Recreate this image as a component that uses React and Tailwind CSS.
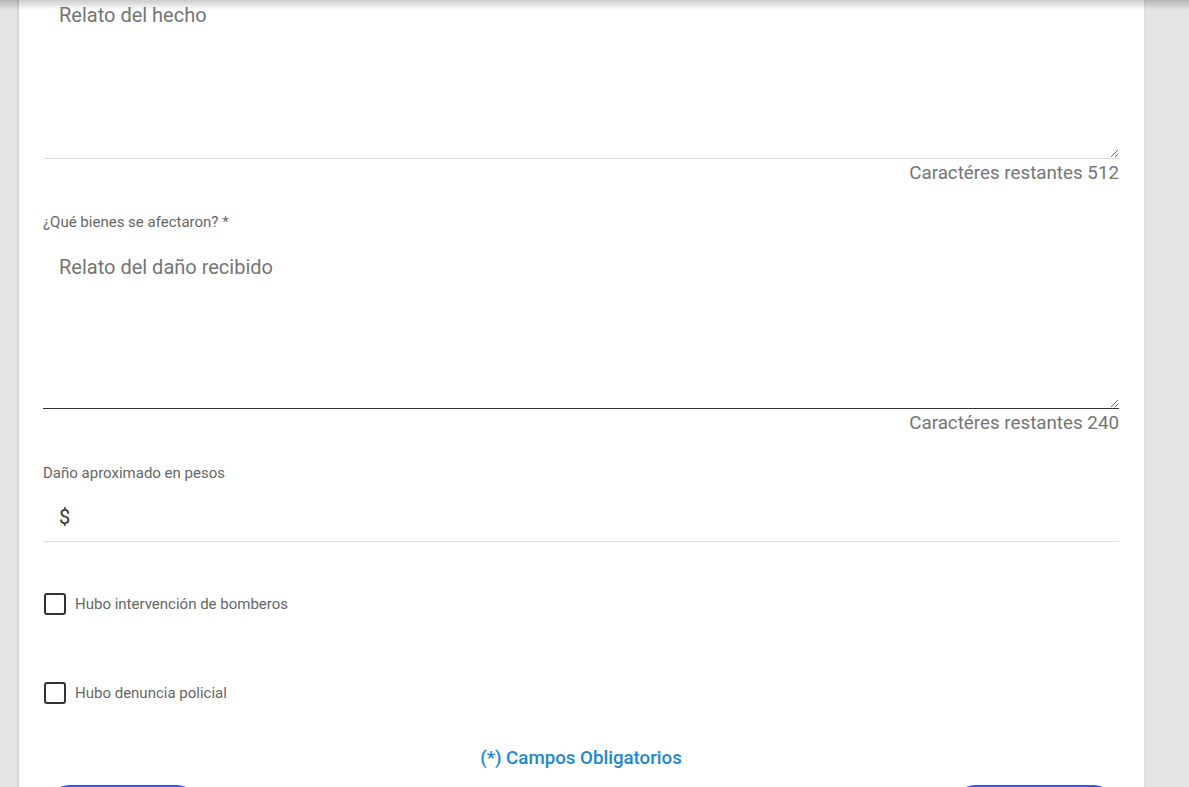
import React from 'react';

const font = { fontFamily: 'Roboto, "Noto Sans", sans-serif' };

function Counter({ left }) {
  return (
    <p className="mt-[2px] text-right text-[18.8px] leading-6 text-[#757575]">Caractéres restantes {left}</p>
  );
}

function Check({ label, className = '' }) {
  return (
    <label className={`flex items-center gap-[9px] ${className}`}>
      <span className="w-[22px] h-[22px] ml-px border-2 border-[#333] rounded-[3px] shrink-0" />
      <span className="text-[15px] leading-5 text-[#666]">{label}</span>
    </label>
  );
}

export default function App() {
  return (
    <div className="h-[787px] overflow-hidden bg-[#e4e4e4] relative" style={font}>
      {/* sombra del header fijo */}
      <div className="absolute top-0 left-0 right-0 h-[10px] bg-gradient-to-b from-black/20 to-transparent z-10 pointer-events-none" />

      <div className="ml-[19px] w-[1125px] min-h-[860px] bg-white shadow-[-1px_0_3px_rgba(0,0,0,0.12)] pl-[24px] pr-[25px] pt-px">
        <textarea
          placeholder="Relato del hecho"
          className="block w-full h-[172px] -mt-[14px] pt-4 px-4 text-[20px] leading-6 text-[#333] placeholder:text-[#757575] border-b border-[#ddd] outline-none"
        />
        <Counter left={512} />

        <p className="mt-[27px] text-[15px] leading-5 text-[#666]">¿Qué bienes se afectaron? *</p>
        <textarea
          placeholder="Relato del daño recibido"
          className="block w-full h-[170px] mt-[7px] pt-4 px-4 text-[20px] leading-6 text-[#333] placeholder:text-[#757575] border-b border-[#333] outline-none"
        />
        <Counter left={240} />

        <p className="mt-[28px] text-[15px] leading-5 text-[#666]">Daño aproximado en pesos</p>
        <div className="pt-[22px] pb-[12px] px-4 text-[20px] leading-6 text-[#333] border-b border-[#ddd]">$</div>

        <Check label="Hubo intervención de bomberos" className="mt-[51px]" />
        <Check label="Hubo denuncia policial" className="mt-[67px]" />

        <p className="mt-[42px] text-center text-[18.7px] leading-6 font-medium text-[#1b87d1]">(*) Campos Obligatorios</p>

        <div className="mt-[15px] flex justify-between">
          <button className="ml-[6px] w-[148px] h-10 rounded-[20px] bg-[#3354ff]" />
          <button className="mr-[5px] w-[159px] h-10 rounded-[20px] bg-[#3354ff]" />
        </div>
      </div>
    </div>
  );
}
